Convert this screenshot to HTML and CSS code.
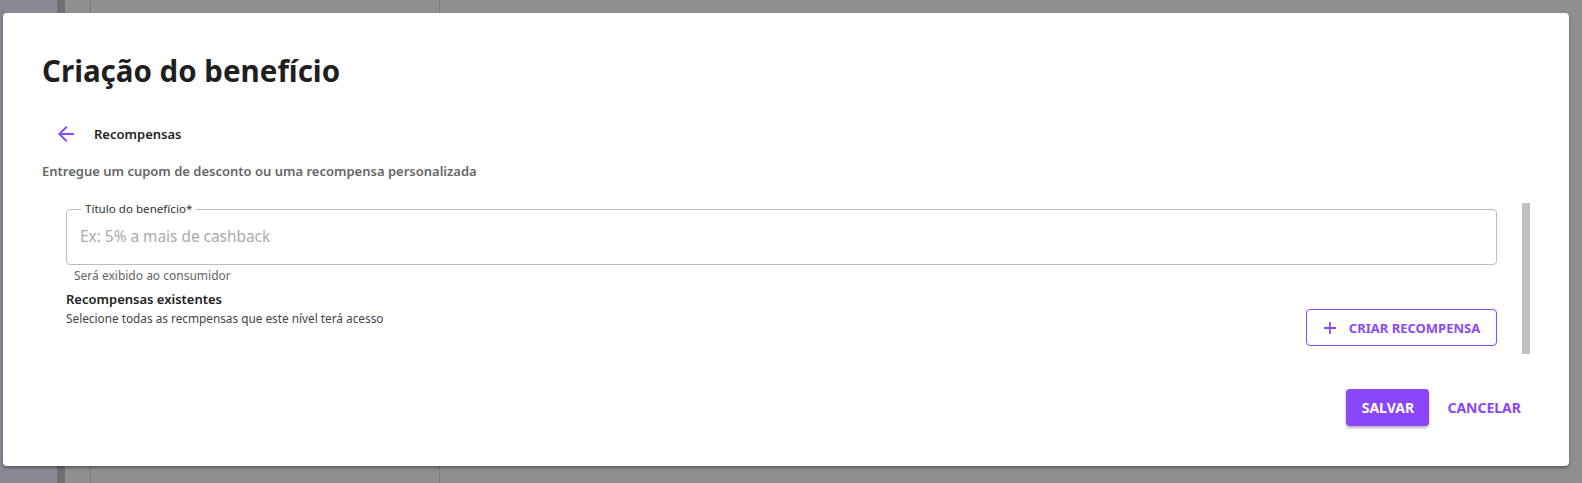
FILE: index.html
```html
<!DOCTYPE html>
<html lang="pt-BR">
<head>
<meta charset="utf-8">
<title>Criação do benefício</title>
<link rel="stylesheet" href="styles.css">
</head>
<body>

<div class="page">
  <div class="page-nav"></div>
  <div class="page-rail"></div>
  <div class="page-main">
    <div class="page-col page-col-narrow"></div>
    <div class="page-col page-col-wide"></div>
    <div class="page-col"></div>
  </div>
</div>

<div class="dialog">
  <h2 class="dialog-title">Criação do benefício</h2>

  <div class="dialog-content">
    <div class="step-head">
      <button class="back-btn" type="button" aria-label="Voltar">
        <svg width="24" height="24" viewBox="0 0 24 24"><path d="M20 11H7.83l5.59-5.59L12 4l-8 8 8 8 1.41-1.41L7.83 13H20v-2z" fill="currentColor"/></svg>
      </button>
      <span class="step-name">Recompensas</span>
    </div>
    <p class="step-desc">Entregue um cupom de desconto ou uma recompensa personalizada</p>

    <div class="scroll-box">
      <div class="scroll-inner">
        <div class="text-field">
          <label class="text-field-label" for="titulo">Título do benefício*</label>
          <input id="titulo" type="text" placeholder="Ex: 5% a mais de cashback">
        </div>
        <div class="helper">Será exibido ao consumidor</div>

        <div class="section-title">Recompensas existentes</div>
        <div class="section-row">
          <div class="section-sub">Selecione todas as recmpensas que este nível terá acesso</div>
          <button class="btn-outline" type="button">
            <svg width="14" height="14" viewBox="0 0 14 14"><path d="M7 1v12M1 7h12" stroke="currentColor" stroke-width="1.8"/></svg>
            Criar recompensa
          </button>
        </div>
      </div>
      <div class="scroll-thumb"></div>
    </div>
  </div>

  <div class="dialog-actions">
    <button class="btn-primary" type="button">Salvar</button>
    <button class="btn-text" type="button">Cancelar</button>
  </div>
</div>

</body>
</html>
```

FILE: styles.css
```css
html, body
{
   margin: 0;
   height: 100%;
}

body
{
   background: #8f8f8f;
   font-family: "Noto Sans", sans-serif;
   color: #222;
   overflow: hidden;
}

/* page behind the backdrop */
.page
{
   display: flex;
   height: 100%;
}

.page-nav
{
   width: 57px;
   background: #8a8894;
}

.page-rail
{
   width: 8px;
   background: #6f6f6f;
}

.page-main
{
   flex: 1;
   display: flex;
}

.page-col
{
   flex: 1;
}

.page-col-narrow
{
   flex: none;
   width: 25px;
   border-right: 1px solid #7a7a7a;
}

.page-col-wide
{
   flex: none;
   width: 348px;
   border-right: 1px solid #7a7a7a;
}

/* dialog */
.dialog
{
   position: absolute;
   left: 3px;
   top: 13px;
   width: 1566px;
   height: 453px;
   box-sizing: border-box;
   background: #fff;
   border-radius: 4px;
   box-shadow: 0 2px 3px rgba(0,0,0,0.35);
   display: flex;
   flex-direction: column;
}

.dialog-title
{
   margin: 0;
   padding: 39px 39px 0;
   font-size: 29.5px;
   line-height: 38px;
   font-weight: 700;
   color: #1f1f1f;
}

.dialog-content
{
   padding: 0 39px;
   flex: 1;
}

.step-head
{
   display: flex;
   align-items: center;
   margin-top: 29px;
   height: 30px;
}

.back-btn
{
   border: 0;
   background: none;
   padding: 0;
   margin-left: 12px;
   width: 24px;
   height: 24px;
   color: #8a4af8;
   display: flex;
}

.step-name
{
   margin-left: 16px;
   font-size: 13px;
   font-weight: 600;
   color: #1f1f1f;
}

.step-desc
{
   margin: 13px 0 0;
   font-size: 13px;
   line-height: 18px;
   font-weight: 600;
   color: #666;
}

.scroll-box
{
   display: flex;
   margin-top: 23px;
   height: 151px;
}

.scroll-inner
{
   flex: 1;
   padding: 6px 25px 0 24px;
}

.scroll-thumb
{
   width: 8px;
   background: #c1c1c1;
}

.text-field
{
   position: relative;
   display: flex;
   align-items: center;
   height: 56px;
   box-sizing: border-box;
   padding: 0 13px;
   border: 1px solid #bdbdbd;
   border-radius: 4px;
}

.text-field-label
{
   position: absolute;
   left: 14px;
   top: -9px;
   padding: 0 4px;
   background: #fff;
   font-size: 11.6px;
   line-height: 16px;
   color: #333;
}

.text-field input
{
   border: 0;
   outline: 0;
   width: 100%;
   padding: 0;
   font-family: inherit;
   font-size: 15.4px;
   line-height: 24px;
   color: #333;
}

.text-field input::placeholder
{
   color: #aaa;
}

.helper
{
   margin: 3px 0 0 8px;
   font-size: 12px;
   line-height: 16px;
   color: #666;
}

.section-title
{
   margin-top: 5px;
   font-size: 13px;
   line-height: 20px;
   font-weight: 600;
   color: #222;
}

.section-row
{
   display: flex;
   justify-content: space-between;
   align-items: flex-start;
   margin-top: 0;
}

.section-sub
{
   font-size: 11.8px;
   line-height: 18px;
   color: #444;
}

.btn-outline
{
   margin-top: 0;
   display: flex;
   align-items: center;
   gap: 12px;
   height: 37px;
   width: 191px;
   justify-content: center;
   border: 1px solid #8a4af8;
   border-radius: 4px;
   background: #fff;
   color: #8a4af8;
   font-family: inherit;
   font-size: 13px;
   font-weight: 700;
   text-transform: uppercase;
}

.dialog-actions
{
   display: flex;
   justify-content: flex-end;
   align-items: center;
   gap: 10px;
   padding: 0 40px 40px;
}

.btn-primary
{
   height: 37px;
   width: 83px;
   border: 0;
   border-radius: 4px;
   background: #8a46fa;
   color: #fff;
   font-family: inherit;
   font-size: 14px;
   font-weight: 700;
   text-transform: uppercase;
   box-shadow: 0 2px 3px rgba(0,0,0,0.3);
}

.btn-text
{
   height: 37px;
   padding: 0 8px;
   border: 0;
   background: none;
   color: #8a46fa;
   font-family: inherit;
   font-size: 14px;
   font-weight: 700;
   text-transform: uppercase;
}
```
